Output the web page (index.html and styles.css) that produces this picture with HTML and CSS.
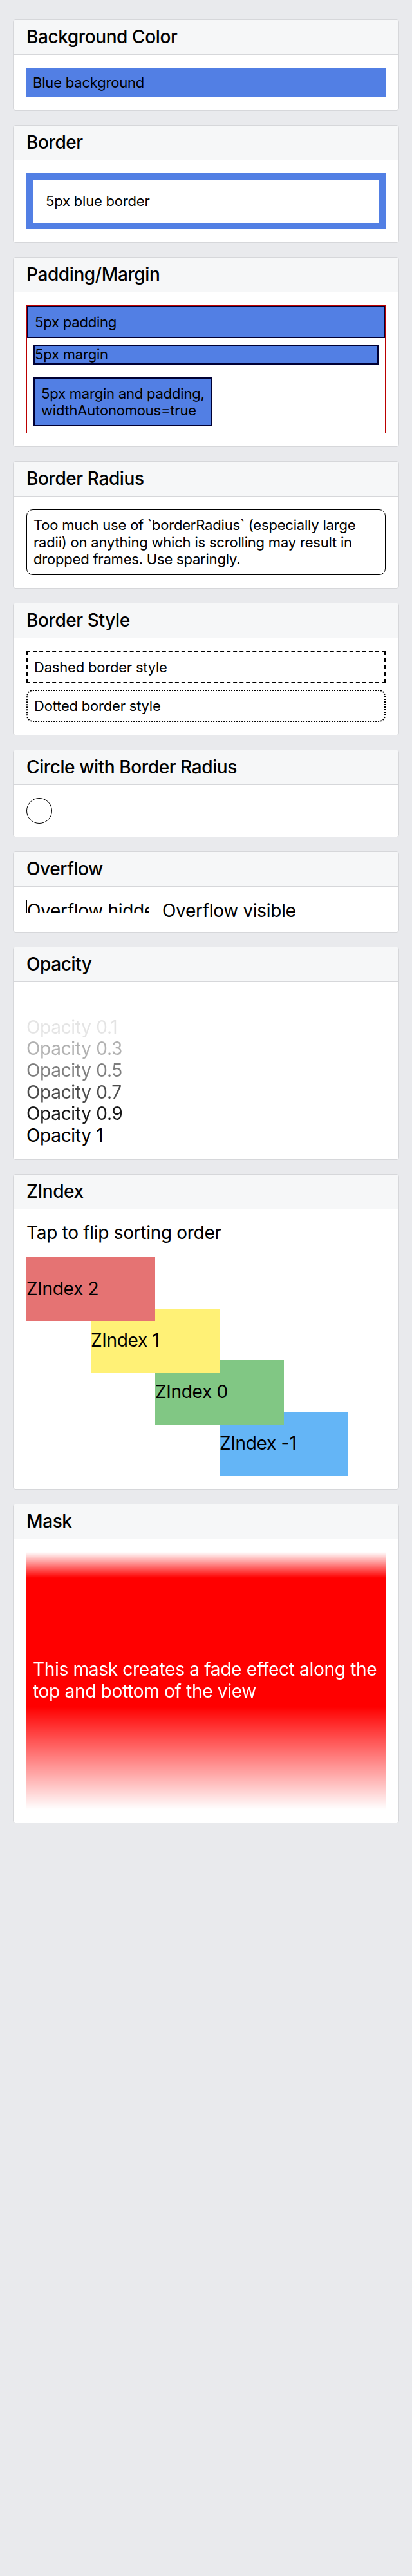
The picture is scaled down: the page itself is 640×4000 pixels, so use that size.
FILE: index.html
```html
<!DOCTYPE html>
<html>
<head>
<meta charset="utf-8">
<link rel="stylesheet" href="styles.css">
</head>
<body>
<div class="page">

  <section class="card">
    <div class="card-header"><h2 class="card-title">Background Color</h2></div>
    <div class="card-body">
      <div class="bg-blue"><span class="small">Blue background</span></div>
    </div>
  </section>

  <section class="card">
    <div class="card-header"><h2 class="card-title">Border</h2></div>
    <div class="card-body">
      <div class="blue-border"><span class="small">5px blue border</span></div>
    </div>
  </section>

  <section class="card">
    <div class="card-header"><h2 class="card-title">Padding/Margin</h2></div>
    <div class="card-body">
      <div class="red-frame">
        <div class="box pad"><span class="small">5px padding</span></div>
        <div class="box mar"><span class="small">5px margin</span></div>
        <div class="box mar pad auto">
          <span class="small line">5px margin and padding,</span>
          <span class="small line">widthAutonomous=true</span>
        </div>
      </div>
    </div>
  </section>

  <section class="card">
    <div class="card-header"><h2 class="card-title">Border Radius</h2></div>
    <div class="card-body">
      <div class="radius-box"><p class="small para">Too much use of `borderRadius` (especially large radii) on anything which is scrolling may result in dropped frames. Use sparingly.</p></div>
    </div>
  </section>

  <section class="card">
    <div class="card-header"><h2 class="card-title">Border Style</h2></div>
    <div class="card-body">
      <div class="dashed"><span class="small">Dashed border style</span></div>
      <div class="dotted"><span class="small">Dotted border style</span></div>
    </div>
  </section>

  <section class="card">
    <div class="card-header"><h2 class="card-title">Circle with Border Radius</h2></div>
    <div class="card-body">
      <div class="circle"></div>
    </div>
  </section>

  <section class="card">
    <div class="card-header"><h2 class="card-title">Overflow</h2></div>
    <div class="card-body">
      <div class="overflow-row">
        <div class="ov-box ov-hidden"><div class="ov-inner"><span class="big">Overflow hidden</span></div></div>
        <div class="ov-box ov-visible"><span class="big nowrap">Overflow visible</span></div>
      </div>
    </div>
  </section>

  <section class="card">
    <div class="card-header"><h2 class="card-title">Opacity</h2></div>
    <div class="card-body opacity-list">
      <div class="big op-0">Opacity 0</div>
      <div class="big op-1">Opacity 0.1</div>
      <div class="big op-3">Opacity 0.3</div>
      <div class="big op-5">Opacity 0.5</div>
      <div class="big op-7">Opacity 0.7</div>
      <div class="big op-9">Opacity 0.9</div>
      <div class="big op-10">Opacity 1</div>
    </div>
  </section>

  <section class="card">
    <div class="card-header"><h2 class="card-title">ZIndex</h2></div>
    <div class="card-body zstack">
      <div class="big tap">Tap to flip sorting order</div>
      <div class="zbox z-red"><span class="big">ZIndex 2</span></div>
      <div class="zbox z-yellow"><span class="big">ZIndex 1</span></div>
      <div class="zbox z-green"><span class="big">ZIndex 0</span></div>
      <div class="zbox z-blue"><span class="big">ZIndex -1</span></div>
    </div>
  </section>

  <section class="card">
    <div class="card-header"><h2 class="card-title">Mask</h2></div>
    <div class="card-body">
      <div class="mask"><p class="big mask-text">This mask creates a fade effect along the top and bottom of the view</p></div>
    </div>
  </section>

</div>
</body>
</html>
```
FILE: styles.css
```css
* { box-sizing: border-box; }

body {
  margin: 0;
  background: #e9eaed;
  font-family: Inter, Roboto, "Liberation Sans", sans-serif;
  color: #000;
}

.page {
  display: flex;
  flex-direction: column;
  gap: 22px;
  padding: 30px 20px 20px;
}

.card {
  background: #fff;
  border: 1px solid #d6d7da;
  border-radius: 4px;
  overflow: hidden;
}

.card-header {
  background: #f6f7f8;
  border-bottom: 1px solid #d6d7da;
  padding: 10px 20px;
}

.card-title {
  margin: 0;
  font-size: 28px;
  font-weight: 500;
  line-height: 33px;
  letter-spacing: -0.4px;
}

.card-body {
  padding: 20px;
}

.small {
  font-size: 22px;
  line-height: 1.2;
  letter-spacing: -0.2px;
}

.big {
  font-size: 28px;
  line-height: 1.2;
  letter-spacing: -0.3px;
}

.line { display: block; }

/* Background */
.bg-blue {
  background: #527fe4;
  padding: 10px;
}

/* Border */
.blue-border {
  border: 10px solid #527fe4;
  padding: 20px;
}

/* Padding / Margin */
.red-frame {
  border: 1px solid #bb0000;
  display: flex;
  flex-direction: column;
  align-items: stretch;
}

.box {
  background: #527fe4;
  border: 2px solid #000033;
}

.pad { padding: 10px; }
.mar { margin: 10px; }
.auto { align-self: flex-start; }

/* Border radius */
.radius-box {
  border: 1px solid #000;
  border-radius: 10px;
  padding: 10px;
}

.para { margin: 0; }

/* Border style */
.dashed {
  border: 2px dashed #000;
  padding: 10px;
}

.dotted {
  border: 2px dotted #000;
  border-radius: 10px;
  padding: 10px;
  margin-top: 10px;
}

/* Circle */
.circle {
  width: 40px;
  height: 40px;
  border: 1px solid #000;
  border-radius: 50%;
}

/* Overflow */
.overflow-row {
  display: flex;
  flex-direction: row;
  align-items: flex-start;
  padding-bottom: 10px;
}

.ov-box {
  width: 190px;
  height: 20px;
  border-top: 1px solid #000;
  border-left: 1px solid #000;
}

.ov-hidden {
  overflow: hidden;
  margin-right: 20px;
}

.ov-inner {
  width: 400px;
  height: 40px;
}

.nowrap { white-space: nowrap; }

/* Opacity */
.op-0 { opacity: 0; }
.op-1 { opacity: 0.1; }
.op-3 { opacity: 0.3; }
.op-5 { opacity: 0.5; }
.op-7 { opacity: 0.7; }
.op-9 { opacity: 0.9; }
.op-10 { opacity: 1; }

/* ZIndex */
.zstack {
  display: flex;
  flex-direction: column;
  align-items: flex-start;
}

.tap { padding-bottom: 20px; }

.zbox {
  position: relative;
  width: 200px;
  height: 100px;
  margin-top: -20px;
  display: flex;
  flex-direction: column;
  justify-content: space-around;
}

.z-red { background: #e57373; margin-top: 0; z-index: 4; }
.z-yellow { background: #fff176; margin-left: 100px; z-index: 3; }
.z-green { background: #81c784; margin-left: 200px; z-index: 2; }
.z-blue { background: #64b5f6; margin-left: 300px; z-index: 1; }

/* Mask */
.mask {
  height: 400px;
  background: #ff0000;
  display: flex;
  align-items: center;
  padding: 0 10px;
  -webkit-mask-image: linear-gradient(to bottom, transparent 0%, #000 10%, #000 60%, transparent 100%);
  mask-image: linear-gradient(to bottom, transparent 0%, #000 10%, #000 60%, transparent 100%);
}

.mask-text {
  margin: 0;
  color: #fff;
}
```
